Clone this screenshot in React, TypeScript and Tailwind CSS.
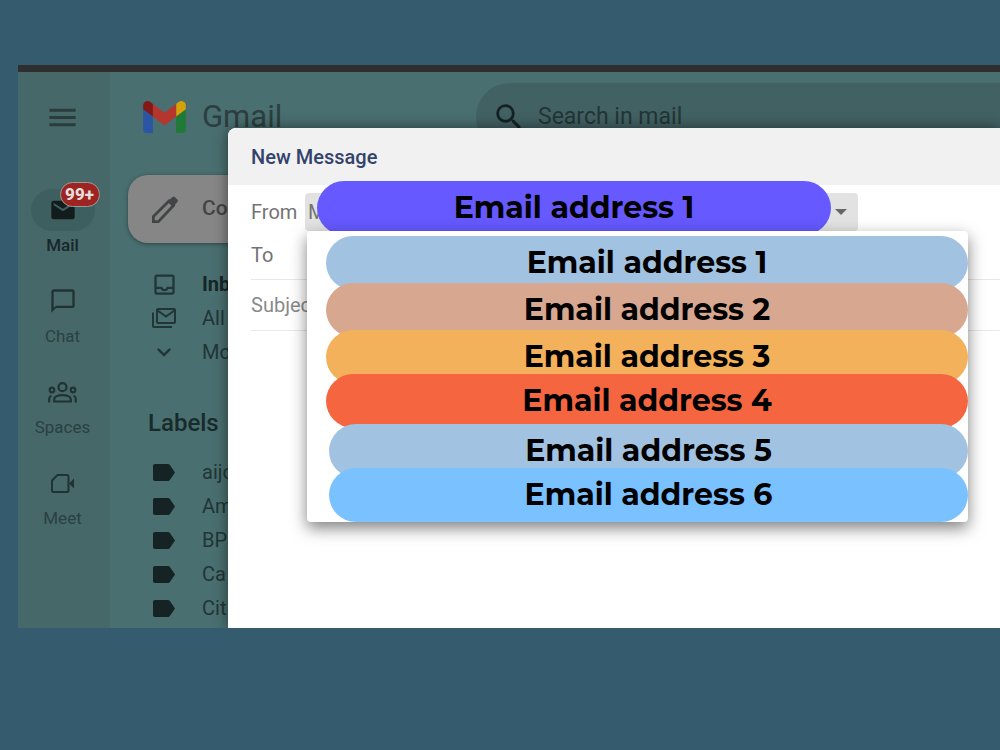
import { useState } from "react";
import type { ReactNode } from "react";
import { MdChatBubbleOutline, MdEmail, MdExpandMore, MdMenu, MdOutlineInbox, MdSearch } from "react-icons/md";

const addresses = [
  { label: "Email address 1", style: "ml-[19px] bg-[#a2c2e1]" },
  { label: "Email address 2", style: "ml-[19px] -mt-[7px] bg-[#d7a88f]" },
  { label: "Email address 3", style: "ml-[19px] -mt-[7px] bg-[#f4b15b]" },
  { label: "Email address 4", style: "ml-[19px] -mt-[10px] bg-[#f56640]" },
  { label: "Email address 5", style: "ml-[22px] -mt-1 bg-[#a2c2e1]" },
  { label: "Email address 6", style: "ml-[22px] -mt-[10px] bg-[#7ac1ff]" },
];

const labels = ["aijo", "Am", "BP", "Ca", "Cit"];

function GmailLogo() {
  return (
    <svg viewBox="52 42 88 66" className="w-[43px] h-8" aria-hidden="true">
      <path fill="#2b55a5" d="M58 108h14V74L52 59v43c0 3.32 2.69 6 6 6" />
      <path fill="#1f7a38" d="M120 108h14c3.32 0 6-2.69 6-6V59l-20 15" />
      <path fill="#d6a008" d="M120 48v26l20-15v-8c0-7.42-8.47-11.65-14.4-7.2" />
      <path fill="#b6352d" d="M72 74V48l24 18 24-18v26L96 92" />
      <path fill="#831917" d="M52 51v8l20 15V48l-5.6-4.2c-5.94-4.45-14.4-.22-14.4 7.2" />
    </svg>
  );
}

function PencilIcon() {
  return (
    <svg viewBox="0 0 26 27" className="w-[26px] h-[27px] shrink-0" fill="none" stroke="currentColor" strokeWidth="2.8" aria-hidden="true">
      <path d="M1.400 20.600L17 5l4.500 4.500L6.400 25.600h-5z" />
      <path d="M15.500 5.500l5-4.500c.7-.7 1.600-.7 2.300 0L25.400 3.600c.7.700.7 1.600 0 2.300L21 11z" fill="currentColor" stroke="none" />
    </svg>
  );
}

function SpacesIcon() {
  return (
    <svg viewBox="0 0 29 21" className="w-[29px] h-[21px]" fill="none" stroke="currentColor" strokeWidth="2.2" aria-hidden="true">
      <circle cx="14.5" cy="5.2" r="4" />
      <circle cx="4" cy="8" r="2.300" />
      <circle cx="25" cy="8" r="2.300" />
      <path d="M6.200 19.500v-2.300c0-2.400 3.600-4 8.300-4s8.300 1.600 8.300 4v2.300z" />
      <path d="M3.400 13.600C2 14.400 1.200 15.600 1.200 17v3.400M25.600 13.600c1.400.8 2.200 2 2.200 3.400v3.400" />
    </svg>
  );
}

function MeetIcon() {
  return (
    <svg viewBox="0 0 23 19" className="w-[23px] h-[19px]" fill="none" stroke="currentColor" strokeWidth="2" aria-hidden="true">
      <path d="M6.500 1H16a1.500 1.500 0 0 1 1.500 1.500v14A1.500 1.500 0 0 1 16 18H2.500A1.500 1.500 0 0 1 1 16.500V6.500z" strokeLinejoin="round" />
      <path d="M18 9.500l5-5v10z" fill="currentColor" stroke="none" />
    </svg>
  );
}

function AllMailIcon() {
  return (
    <svg viewBox="0 0 24 20" className="w-6 h-5" fill="none" stroke="currentColor" strokeWidth="2" aria-hidden="true">
      <rect x="5" y="1" width="18" height="14" rx="1" />
      <path d="M5.500 2.500L14 8.500l8.500-6M1 4.500V18a1 1 0 0 0 1 1h18" />
    </svg>
  );
}

function LabelIcon() {
  return (
    <svg viewBox="0 0 22 17" className="w-[22px] h-[17px]" fill="#152324" aria-hidden="true">
      <path d="M2 0h13c.8 0 1.400.3 1.900 1L22 8.500 16.900 16c-.5.7-1.100 1-1.900 1H2c-1.200 0-2-.8-2-2V2C0 .8.8 0 2 0z" />
    </svg>
  );
}

function RailItem({ icon, text, active }: { icon: ReactNode; text: string; active?: boolean }) {
  return (
    <a href="#" className={`flex flex-col items-center gap-[3px] ${active ? "text-[#182728] font-medium" : "text-[#2b4041]"}`}>
      <span className={`relative flex items-center justify-center w-16 h-[42px] rounded-full ${active ? "bg-[#3e5f60] text-[#131c1d]" : "text-[#213233]"}`}>
        {icon}
        {active && (
          <span className="absolute left-[29px] -top-[7px] flex items-center justify-center w-10 h-[25px] rounded-full border border-[#9a9a9a] bg-[#9d2420] text-[17px] font-extrabold text-[#e4dede]">
            99+
          </span>
        )}
      </span>
      <span className="text-[17px] leading-[23px]">{text}</span>
    </a>
  );
}

function MailRow({ icon, text, bold }: { icon: ReactNode; text: string; bold?: boolean }) {
  return (
    <a href="#" className="flex items-center h-[34px] text-xl whitespace-nowrap text-[#213536]">
      <span className="flex justify-center shrink-0 w-6 ml-[42px] mr-[26px]">{icon}</span>
      <span className={bold ? "font-bold text-[#162526]" : ""}>{text}</span>
    </a>
  );
}

function ComposeWindow() {
  const [from, setFrom] = useState("Email address 1");

  return (
    <section className="absolute left-[210px] right-0 top-14 bottom-0 bg-white rounded-tl-lg shadow-[0_0_14px_rgba(0,0,0,0.5)]">
      <h2 className="flex items-center h-[57px] pl-[23px] rounded-tl-lg bg-[#f1f1f1] text-xl font-medium text-[#33436b]">New Message</h2>
      <form className="relative pl-[23px] text-xl text-[#737373]">
        <div className="flex items-center h-[46px] pt-2 pr-[142px]">
          <label htmlFor="from" className="w-[54px]">From</label>
          <div className="relative flex-1">
            <select id="from" className="block appearance-none w-full h-[38px] pl-[3px] rounded bg-[#e2e2e2]">
              <option>M</option>
            </select>
            <svg viewBox="0 0 12 6" className="absolute right-[11px] top-4 w-3 h-1.5 pointer-events-none" aria-hidden="true">
              <path d="M0 0h12L6 6z" fill="#666" />
            </svg>
            <div className="absolute left-3 right-[27px] -top-3 flex items-center justify-center h-[54px] rounded-full bg-[#6559ff] font-['Montserrat','Inter',sans-serif] text-[30px] font-bold text-black">
              {from}
            </div>
          </div>
        </div>
        <div className="flex items-center h-[49px] border-b border-[#e8e8e8]">
          <label htmlFor="to">To</label>
          <input id="to" className="flex-1 ml-4 outline-none" />
        </div>
        <div className="flex items-center h-[51px] border-b border-[#e8e8e8]">
          <input aria-label="Subject" placeholder="Subject" className="flex-1 outline-none placeholder:text-[#8a8a8a]" />
        </div>
        <ul className="absolute left-[79px] right-8 top-[46px] pt-[5px] rounded bg-white shadow-[0_6px_16px_rgba(0,0,0,0.5)]">
          {addresses.map((a) => (
            <li key={a.label} className={`relative rounded-full ${a.style}`}>
              <button
                type="button"
                onClick={() => setFrom(a.label)}
                className="block w-full h-[54px] font-['Montserrat','Inter',sans-serif] text-[30px] font-bold text-black"
              >
                {a.label}
              </button>
            </li>
          ))}
        </ul>
      </form>
    </section>
  );
}

export default function App() {
  return (
    <div className="min-h-screen pt-[65px] pl-[18px] bg-[#355c6e] font-['Roboto',sans-serif]">
      <div className="relative overflow-hidden border-t-[7px] border-[#302f2f] bg-[#4a6f70] flex">
        <nav className="flex flex-col items-center w-[92px] pt-6 pr-[3px] bg-[#466869]">
          <button aria-label="Main menu" className="flex items-center h-[42px] mb-[51px] text-[#2b3c3d]">
            <MdMenu size={35} />
          </button>
          <div className="flex flex-col gap-[23px]">
            <RailItem icon={<MdEmail size={28} />} text="Mail" active />
            <RailItem icon={<MdChatBubbleOutline size={28} />} text="Chat" />
            <RailItem icon={<SpacesIcon />} text="Spaces" />
            <RailItem icon={<MeetIcon />} text="Meet" />
          </div>
        </nav>

        <main className="flex-1 min-w-0 pt-[11px] pb-[3px]">
          <header className="flex items-center">
            <div className="flex items-center gap-4 w-[366px] pl-[33px]">
              <GmailLogo />
              <span className="text-[31px] leading-8 text-[#2c3e3f]">Gmail</span>
            </div>
            <label className="flex flex-1 items-center gap-3 h-[68px] pl-4 rounded-l-full bg-[#426163] text-[#152122]">
              <MdSearch size={34} />
              <input
                type="search"
                aria-label="Search in mail"
                placeholder="Search in mail"
                className="flex-1 text-[23px] outline-none placeholder:text-[#233536]"
              />
            </label>
          </header>

          {/* the sidebar is cut off where the compose window starts */}
          <aside className="w-[118px] overflow-hidden pt-6">
            <button className="flex items-center gap-6 w-[220px] h-[68px] ml-[18px] pl-6 rounded-[20px] bg-[#868686] shadow-[0_1px_4px_rgba(0,0,0,0.4)] text-[21px] font-medium text-[#424546]">
              <PencilIcon />
              Co
            </button>
            <div className="mt-6">
              <MailRow icon={<MdOutlineInbox size={27} className="shrink-0" />} text="Inb" bold />
              <MailRow icon={<AllMailIcon />} text="All" />
              <MailRow icon={<MdExpandMore size={28} className="shrink-0" />} text="Mo" />
            </div>
            <h3 className="mt-[37px] mb-[15px] ml-[38px] text-2xl leading-[34px] font-medium text-[#192a2b]">Labels</h3>
            {labels.map((l) => (
              <MailRow key={l} icon={<LabelIcon />} text={l} />
            ))}
          </aside>
        </main>

        <ComposeWindow />
      </div>
    </div>
  );
}
